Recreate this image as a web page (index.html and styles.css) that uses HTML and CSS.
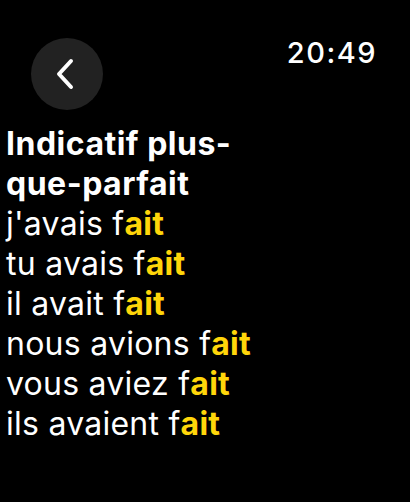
FILE: index.html
```html
<!DOCTYPE html>
<html lang="fr">
<head>
    <meta charset="UTF-8">
    <meta name="viewport" content="width=device-width, initial-scale=1.0">
    <title>Plus-que-parfait</title>
    <link rel="stylesheet" href="styles.css">
</head>
<body>
    <header class="top-bar">
        <button class="back-button" aria-label="Retour">
            <svg width="20" height="32" viewBox="0 0 20 32">
                <path d="M16 3 L4 16 L16 29" fill="none" stroke="#fff" stroke-width="4" stroke-linecap="round" stroke-linejoin="round"/>
            </svg>
        </button>
        <span class="clock">20:49</span>
    </header>
    <main class="conjugation">
        <h1 class="tense">Indicatif plus-<br>que-parfait</h1>
        <ul class="forms">
            <li>j'avais f<span class="ending">ait</span></li>
            <li>tu avais f<span class="ending">ait</span></li>
            <li>il avait f<span class="ending">ait</span></li>
            <li>nous avions f<span class="ending">ait</span></li>
            <li>vous aviez f<span class="ending">ait</span></li>
            <li>ils avaient f<span class="ending">ait</span></li>
        </ul>
    </main>
</body>
</html>
```

FILE: styles.css
```css
body {
    font-family: Inter, "Noto Sans", sans-serif;
    margin: 0;
    padding: 0;
    background-color: #000;
    color: #fff;
    width: 410px;
    height: 502px;
    overflow: hidden;
}
.top-bar {
    display: flex;
    justify-content: space-between;
    align-items: flex-start;
    padding: 38px 33px 0 31px;
}
.back-button {
    width: 72px;
    height: 72px;
    border-radius: 50%;
    border: none;
    background-color: #222;
    display: flex;
    align-items: center;
    justify-content: center;
    padding: 0 4px 0 0;
}
.clock {
    font-size: 29px;
    font-weight: 500;
    line-height: 30px;
    letter-spacing: 1.5px;
}
.conjugation {
    padding: 14px 0 0 6px;
}
.tense {
    margin: 0;
    font-size: 32px;
    font-weight: 700;
    line-height: 40px;
    letter-spacing: 0.5px;
}
.forms {
    list-style: none;
    margin: 0;
    padding: 0;
}
.forms li {
    font-size: 32px;
    line-height: 40px;
    letter-spacing: 0.25px;
}
.ending {
    color: #ffd60a;
    font-weight: 700;
}
```
